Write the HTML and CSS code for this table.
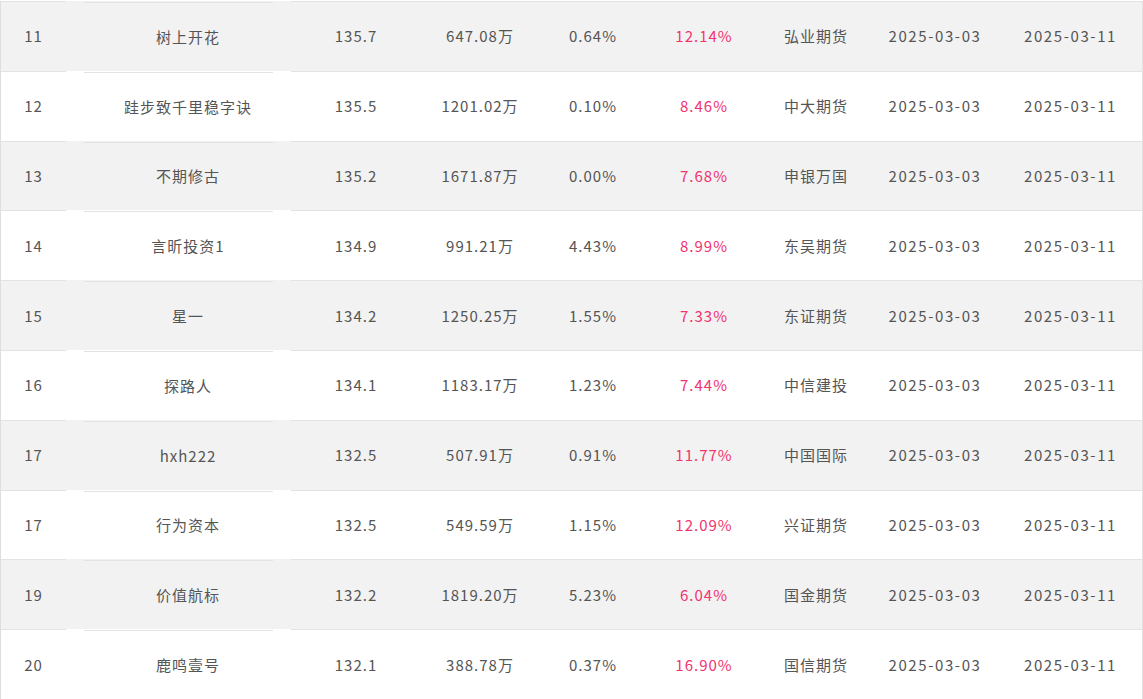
FILE: index.html
```html
<!DOCTYPE html>
<html lang="zh-CN">
<head>
<meta charset="utf-8">
<title>排行榜</title>
<link rel="stylesheet" href="styles.css">
</head>
<body>
<div class="table">
  <div class="row odd"><div class="c">11</div><div class="name"><span>树上开花</span></div><div class="c">135.7</div><div class="c">647.08万</div><div class="c">0.64%</div><div class="c red">12.14%</div><div class="c">弘业期货</div><div class="c d">2025-03-03</div><div class="c d">2025-03-11</div></div>
  <div class="row"><div class="c">12</div><div class="name"><span>跬步致千里稳字诀</span></div><div class="c">135.5</div><div class="c">1201.02万</div><div class="c">0.10%</div><div class="c red">8.46%</div><div class="c">中大期货</div><div class="c d">2025-03-03</div><div class="c d">2025-03-11</div></div>
  <div class="row odd"><div class="c">13</div><div class="name"><span>不期修古</span></div><div class="c">135.2</div><div class="c">1671.87万</div><div class="c">0.00%</div><div class="c red">7.68%</div><div class="c">申银万国</div><div class="c d">2025-03-03</div><div class="c d">2025-03-11</div></div>
  <div class="row"><div class="c">14</div><div class="name"><span>言昕投资1</span></div><div class="c">134.9</div><div class="c">991.21万</div><div class="c">4.43%</div><div class="c red">8.99%</div><div class="c">东吴期货</div><div class="c d">2025-03-03</div><div class="c d">2025-03-11</div></div>
  <div class="row odd"><div class="c">15</div><div class="name"><span>星一</span></div><div class="c">134.2</div><div class="c">1250.25万</div><div class="c">1.55%</div><div class="c red">7.33%</div><div class="c">东证期货</div><div class="c d">2025-03-03</div><div class="c d">2025-03-11</div></div>
  <div class="row"><div class="c">16</div><div class="name"><span>探路人</span></div><div class="c">134.1</div><div class="c">1183.17万</div><div class="c">1.23%</div><div class="c red">7.44%</div><div class="c">中信建投</div><div class="c d">2025-03-03</div><div class="c d">2025-03-11</div></div>
  <div class="row odd"><div class="c">17</div><div class="name"><span>hxh222</span></div><div class="c">132.5</div><div class="c">507.91万</div><div class="c">0.91%</div><div class="c red">11.77%</div><div class="c">中国国际</div><div class="c d">2025-03-03</div><div class="c d">2025-03-11</div></div>
  <div class="row"><div class="c">17</div><div class="name"><span>行为资本</span></div><div class="c">132.5</div><div class="c">549.59万</div><div class="c">1.15%</div><div class="c red">12.09%</div><div class="c">兴证期货</div><div class="c d">2025-03-03</div><div class="c d">2025-03-11</div></div>
  <div class="row odd"><div class="c">19</div><div class="name"><span>价值航标</span></div><div class="c">132.2</div><div class="c">1819.20万</div><div class="c">5.23%</div><div class="c red">6.04%</div><div class="c">国金期货</div><div class="c d">2025-03-03</div><div class="c d">2025-03-11</div></div>
  <div class="row"><div class="c">20</div><div class="name"><span>鹿鸣壹号</span></div><div class="c">132.1</div><div class="c">388.78万</div><div class="c">0.37%</div><div class="c red">16.90%</div><div class="c">国信期货</div><div class="c d">2025-03-03</div><div class="c d">2025-03-11</div></div>
</div>
</body>
</html>
```

FILE: styles.css
```css
html, body {
  margin: 0;
  padding: 0;
  background: #ffffff;
}
body {
  padding-top: 1px;
  font-family: "Noto Sans CJK SC", "Noto Sans", sans-serif;
  font-size: 15px;
  letter-spacing: 1px;
  color: #555555;
  overflow: hidden;
}
.table {
  width: 1143px;
  box-sizing: border-box;
  border-left: 1px solid #dedede;
  border-right: 1px solid #e2e2e2;
}
.row {
  display: grid;
  grid-template-columns: 65px 225px 130px 118px 108px 114px 110px 128px 143px;
  height: 69.8px;
  background: #ffffff;
}
.row.odd {
  background: #f2f2f2;
}
.c {
  display: flex;
  align-items: center;
  justify-content: center;
  border-top: 1px solid #e3e3e3;
  padding-bottom: 1px;
  white-space: nowrap;
}
.d {
  letter-spacing: 1.6px;
}
.name {
  display: flex;
  padding: 1px 18px 0;
}
.name span {
  flex: 1;
  display: flex;
  align-items: center;
  justify-content: center;
  border-top: 1px solid #e3e3e3;
  white-space: nowrap;
  margin-bottom: -1px;
  padding: 0 0 2px 19px;
}
.red {
  color: #f2336f;
}
```
